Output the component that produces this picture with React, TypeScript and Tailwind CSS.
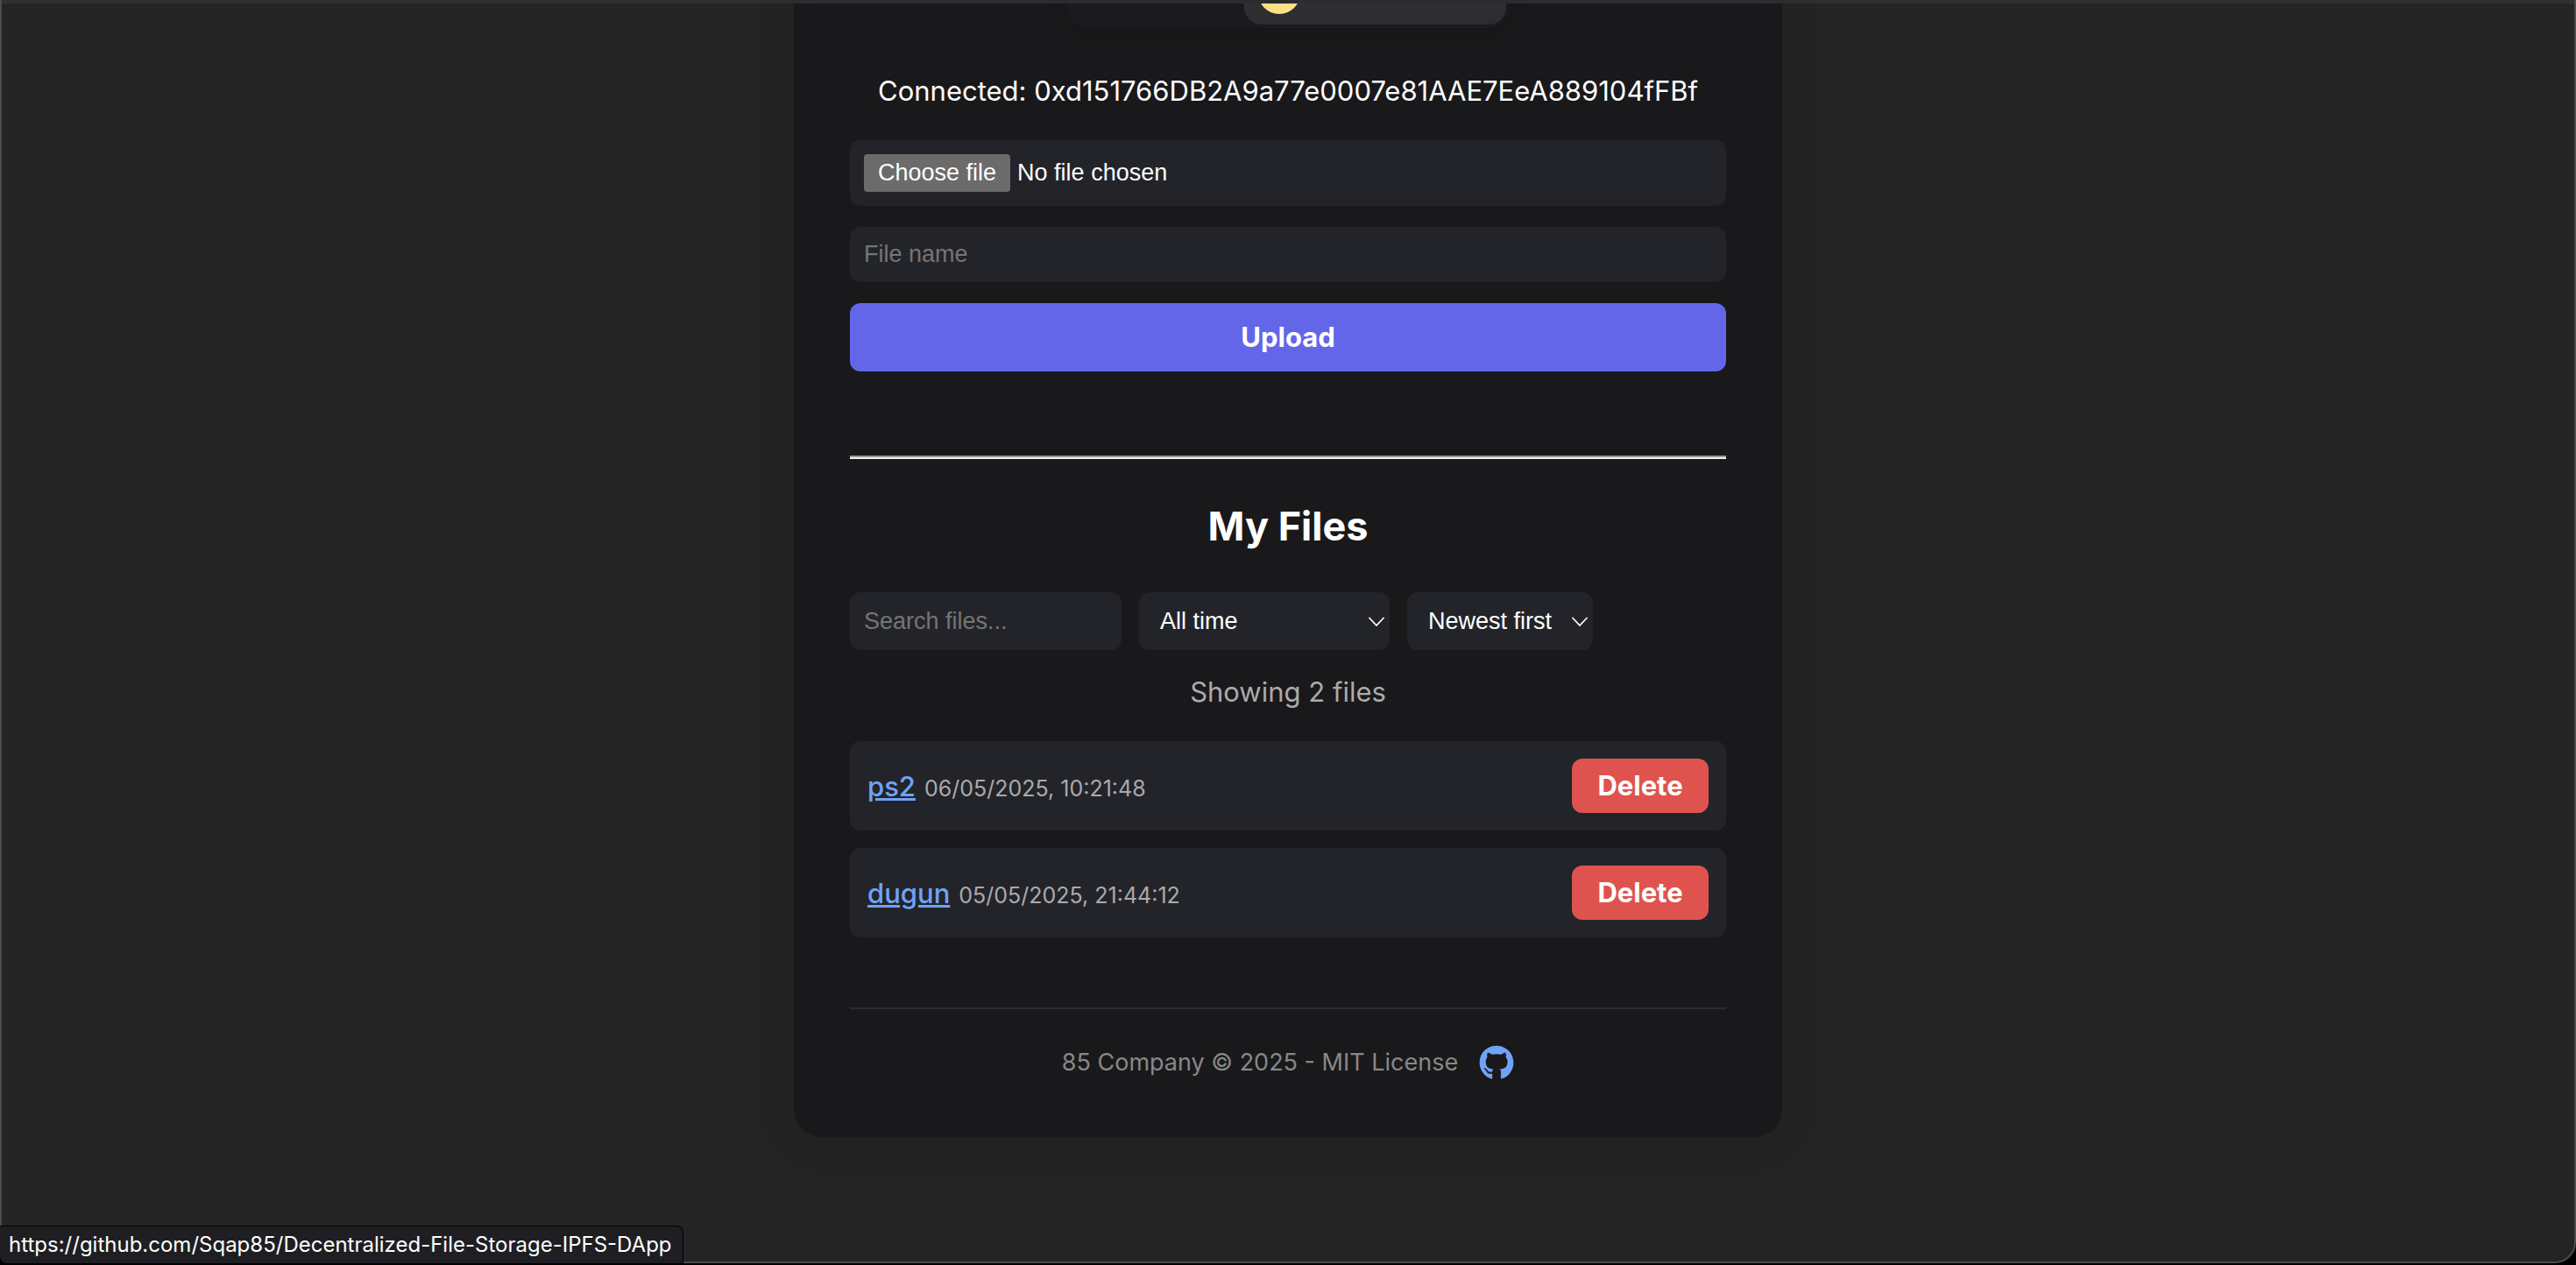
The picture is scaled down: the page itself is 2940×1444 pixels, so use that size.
import React from "react";
import { FaGithub } from "react-icons/fa";
import { ChevronDown } from "lucide-react";

const files = [
  { name: "ps2", date: "06/05/2025, 10:21:48" },
  { name: "dugun", date: "05/05/2025, 21:44:12" },
];

const repoUrl = "https://github.com/Sqap85/Decentralized-File-Storage-IPFS-DApp";

function WalletBar() {
  return (
    <header className="flex h-7 flex-col items-center justify-end">
      <div className="flex w-[506px] shrink-0 items-stretch rounded-3xl bg-[#1a1b1f] pr-1 pb-1 font-bold text-white shadow-[0_8px_24px_rgba(0,0,0,0.1)]">
        <span className="flex grow items-center pl-6 text-[31px]/[40px]">0.162 ETH</span>
        <button
          type="button"
          className="flex h-[72px] w-[299px] items-center gap-3 rounded-[20px] bg-linear-to-b from-[#37383c] to-[#2b2c30] px-4 text-[31px]/[40px]"
        >
          <span className="size-12 shrink-0 rounded-full bg-[#fce184]" />
          0xd1…fFBf
          <ChevronDown className="size-7" strokeWidth={3} />
        </button>
      </div>
    </header>
  );
}

function Select({ label, options, className }: { label: string; options: string[]; className: string }) {
  return (
    <div className={`relative ${className}`}>
      <select
        aria-label={label}
        className="h-[66px] w-full appearance-none rounded-xl bg-[#23242a] pr-8 pl-6 font-['Liberation_Sans',Arial,sans-serif] text-[27px]/[32px] text-white"
      >
        {options.map((o) => (
          <option key={o}>{o}</option>
        ))}
      </select>
      <svg
        viewBox="0 0 20 12"
        className="pointer-events-none absolute top-7 right-[5px] h-3 w-5"
        fill="none"
        stroke="white"
        strokeWidth="1.8"
        strokeLinecap="round"
        strokeLinejoin="round"
      >
        <path d="M2 1.5 10 10l8-8.5" />
      </svg>
    </div>
  );
}

export default function App() {
  return (
    <div className="flex min-h-screen flex-col bg-black font-[Inter,sans-serif] text-white">
      <div className="relative mb-0.5 flex grow flex-col overflow-hidden rounded-b-3xl border-x-2 border-b-2 border-[#4c4c4c] bg-[#242424]">
        <div className="-mx-0.5 h-1 bg-[#2f2f32]" />
        <main className="mx-auto w-full max-w-[1128px] overflow-hidden rounded-b-[32px] bg-[#19191b] px-16 pb-16 shadow-[0_4px_48px_rgba(0,0,0,0.12)]">
          <WalletBar />

          <p className="mt-12 text-center text-[31px]/[48px]">
            Connected: 0xd151766DB2A9a77e0007e81AAE7EeA889104fFBf
          </p>

          <form className="mt-8 flex flex-col gap-6" onSubmit={(e) => e.preventDefault()}>
            <label className="flex h-[75px] w-full items-start gap-2 rounded-xl bg-[#23242a] p-4 font-['Liberation_Sans',Arial,sans-serif] text-[27px]/[43px]">
              <input type="file" className="sr-only" />
              <span className="rounded bg-[#6b6b6b] px-4">Choose file</span>
              <span>No file chosen</span>
            </label>
            <input
              type="text"
              aria-label="File name"
              placeholder="File name"
              className="h-[63px] w-full rounded-xl bg-[#23242a] px-4 font-['Liberation_Sans',Arial,sans-serif] text-[27px]/[31px] placeholder:text-[#757575]"
            />
            <button type="submit" className="h-[78px] rounded-xl bg-[#6366e8] text-[31px]/[38px] font-bold">
              Upload
            </button>
          </form>

          <hr className="mt-24 border-t-2 border-b-2 border-t-[#9a9a9a] border-b-[#eeeeee]" />

          <h2 className="mt-12 text-center text-[45px]/[58px] font-bold">My Files</h2>

          <div className="mt-[46px] flex gap-5">
            <input
              type="text"
              aria-label="Search files"
              placeholder="Search files..."
              className="h-[66px] w-[310px] rounded-xl bg-[#23242a] px-4 font-['Liberation_Sans',Arial,sans-serif] text-[27px]/[31px] placeholder:text-[#757575]"
            />
            <Select label="Period" options={["All time", "Last 7 days", "Last 30 days"]} className="w-[286px]" />
            <Select label="Order" options={["Newest first", "Oldest first"]} className="w-[212px]" />
          </div>

          <p className="mt-6 text-center text-[31px]/[48px] text-[#aaaaaa]">Showing 2 files</p>

          <ul className="mt-8 flex flex-col gap-5">
            {files.map((f) => (
              <li key={f.name} className="flex items-center justify-between rounded-xl bg-[#23242a] p-5">
                <span className="flex items-baseline gap-2.5 pt-0.5">
                  <a href="#" className="text-[31px]/[48px] font-medium text-[#6fa3f6] underline">
                    {f.name}
                  </a>
                  <span className="text-[25px]/[40px] text-[#aaaaaa]">{f.date}</span>
                </span>
                <button type="button" className="h-[62px] w-[156px] rounded-xl bg-[#df534e] text-[31px]/[38px] font-bold">
                  Delete
                </button>
              </li>
            ))}
          </ul>

          <footer className="mt-20 flex items-center justify-center gap-6 border-t-2 border-[#2d2d30] pt-10 text-[27px]/[42px] text-[#888888]">
            <span>85 Company © 2025 - MIT License</span>
            <a href={repoUrl} aria-label="GitHub" className="text-[#6fa3f6]">
              <FaGithub className="size-10" />
            </a>
          </footer>
        </main>
      </div>
      <div className="fixed bottom-0.5 left-0 rounded-tr-lg rounded-bl-lg border-t border-r border-black bg-[#1f1f23] py-1 pr-3 pl-2.5 text-[24px]/[34px]">
        {repoUrl}
      </div>
    </div>
  );
}
